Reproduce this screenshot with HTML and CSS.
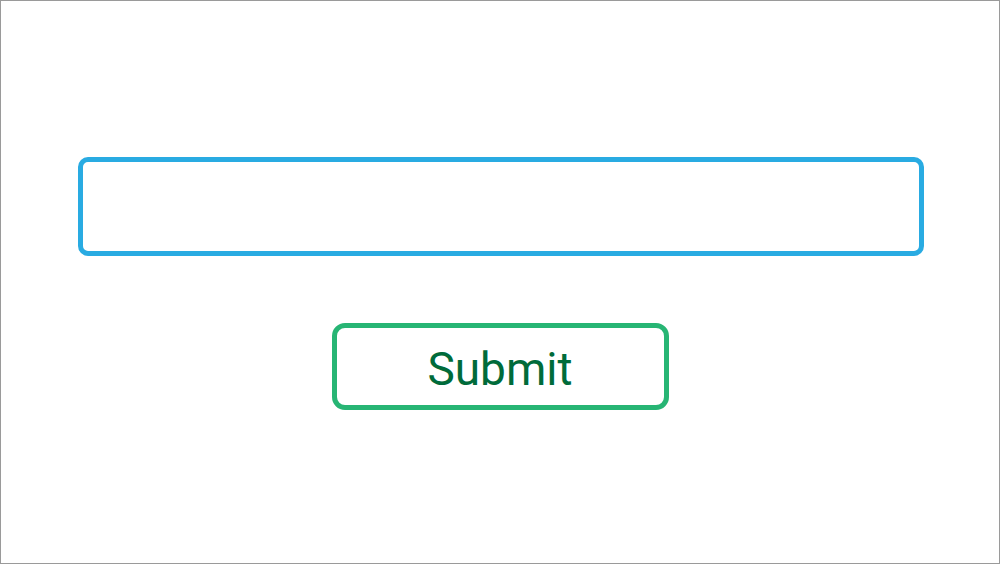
FILE: index.html
```html
<!DOCTYPE html>
<html>
<head>
<meta charset="utf-8">
<link rel="stylesheet" href="styles.css">
</head>
<body>
<div class="frame">
  <div class="field"></div>
  <button class="submit">Submit</button>
</div>
</body>
</html>
```
FILE: styles.css
```css
html, body {
  margin: 0;
  padding: 0;
  background: #ffffff;
}
.frame {
  box-sizing: border-box;
  width: 1000px;
  height: 564px;
  border: 1px solid #9a9a9a;
  display: flex;
  flex-direction: column;
  align-items: center;
  padding-top: 156px;
}
.field {
  box-sizing: border-box;
  width: 846px;
  height: 99px;
  border: 5px solid #29abe2;
  border-radius: 10px;
  margin-left: 2px;
}
.submit {
  box-sizing: border-box;
  margin-top: 67px;
  width: 337px;
  height: 87px;
  border: 5px solid #27b574;
  border-radius: 13px;
  background: #ffffff;
  color: #006b3a;
  font-family: Roboto, "Liberation Sans", sans-serif;
  font-size: 46px;
  padding: 4px 0 0 0;
  line-height: 1;
}
```
